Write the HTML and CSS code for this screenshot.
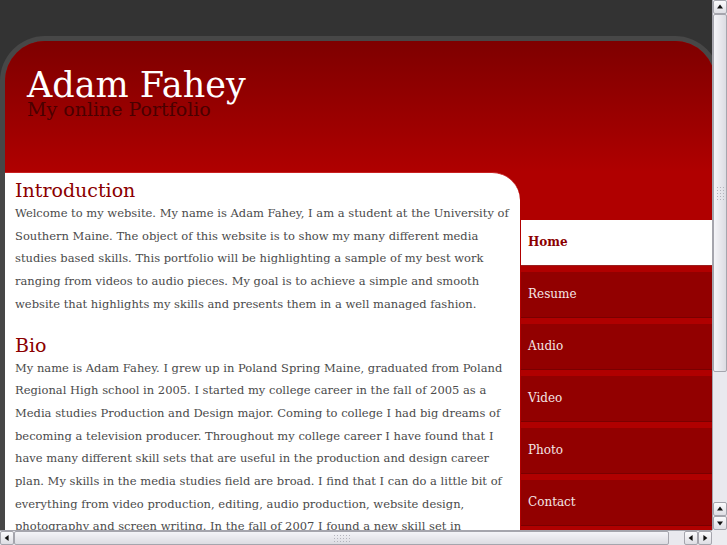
FILE: index.html
```html
<!DOCTYPE html>
<html>
<head>
<meta charset="utf-8">
<title>Adam Fahey - My online Portfolio</title>
<link rel="stylesheet" href="styles.css">
</head>
<body>
<div class="page">
  <header class="header">
    <h1 class="title">Adam Fahey</h1>
    <p class="subtitle">My online Portfolio</p>
  </header>
  <div class="main">
    <div class="content">
      <h2 class="heading">Introduction</h2>
      <p class="text">Welcome to my website. My name is Adam Fahey, I am a student at the University of Southern Maine. The object of this website is to show my many different media studies based skills. This portfolio will be highlighting a sample of my best work ranging from videos to audio pieces. My goal is to achieve a simple and smooth website that highlights my skills and presents them in a well managed fashion.</p>
      <h2 class="heading heading-bio">Bio</h2>
      <p class="text">My name is Adam Fahey. I grew up in Poland Spring Maine, graduated from Poland Regional High school in 2005. I started my college career in the fall of 2005 as a Media studies Production and Design major. Coming to college I had big dreams of becoming a television producer. Throughout my college career I have found that I have many different skill sets that are useful in the production and design career plan. My skills in the media studies field are broad. I find that I can do a little bit of everything from video production, editing, audio production, website design, photography and screen writing. In the fall of 2007 I found a new skill set in</p>
    </div>
    <nav class="nav">
      <a class="nav-item active">Home</a>
      <a class="nav-item">Resume</a>
      <a class="nav-item">Audio</a>
      <a class="nav-item">Video</a>
      <a class="nav-item">Photo</a>
      <a class="nav-item">Contact</a>
    </nav>
  </div>
</div>

<div class="vscroll">
  <div class="sb-btn up"></div>
  <div class="v-track">
    <div class="v-thumb"><span class="grip grip-v"></span></div>
  </div>
  <div class="sb-btn up"></div>
  <div class="sb-btn down"></div>
</div>
<div class="hscroll">
  <div class="sb-btn left"></div>
  <div class="h-track">
    <div class="h-thumb"><span class="grip grip-h"></span></div>
  </div>
  <div class="sb-btn left"></div>
  <div class="sb-btn right"></div>
</div>
<div class="sb-corner"></div>
</body>
</html>
```

FILE: styles.css
```css
html, body {
  margin: 0;
  padding: 0;
  height: 545px;
  overflow: hidden;
  background: #333333;
}

.page {
  margin-top: 36px;
  width: 710px;
  border: 5px solid #474747;
  border-bottom: none;
  border-radius: 45px 45px 0 0;
  background: #b00000;
  overflow: hidden;
}

.header {
  height: 131px;
  padding: 0 0 0 22px;
  background: linear-gradient(#7e0000, #8a0000 25%, #a00000 70%, #b00000);
  font-family: "DejaVu Serif", serif;
}

.title {
  margin: 0;
  padding-top: 28px;
  font-size: 35px;
  font-weight: normal;
  line-height: 32px;
  color: #ffffff;
}

.subtitle {
  margin: 1px 0 0 0;
  font-size: 19px;
  line-height: 14px;
  color: #4a0000;
}

.main {
  display: flex;
  align-items: flex-start;
}

.content {
  width: 495px;
  flex: none;
  background: #ffffff;
  border-top: 1px solid #c82020;
  border-top-right-radius: 28px;
  padding: 5px 10px 0 10px;
  height: 400px;
  font-family: "DejaVu Serif", serif;
}

.heading {
  margin: 0;
  font-size: 19px;
  font-weight: normal;
  line-height: 24px;
  color: #8b0000;
}

.heading-bio {
  margin-top: 17px;
}

.text {
  margin: 0;
  font-size: 11.5px;
  line-height: 22.7px;
  color: #4a4a4a;
}

.nav {
  flex: 1;
  padding-top: 48px;
  padding-left: 1px;
  display: flex;
  flex-direction: column;
  gap: 6px;
  font-family: "DejaVu Serif", serif;
}

.nav-item {
  display: block;
  height: 45px;
  line-height: 45px;
  padding-left: 7px;
  background: #920000;
  border-bottom: 1px solid #7a0000;
  color: #f4e6e6;
  font-size: 12px;
  text-decoration: none;
}

.nav-item.active {
  background: #ffffff;
  color: #8b0000;
  font-weight: bold;
  border-bottom-color: #9a2020;
}

/* drawn scrollbars */
.vscroll {
  position: fixed;
  top: 0;
  right: 0;
  width: 15px;
  height: 530px;
  display: flex;
  flex-direction: column;
  background: #e9e9ee;
  box-sizing: border-box;
  border-left: 1px solid #a5a5ad;
}

.hscroll {
  position: fixed;
  left: 0;
  bottom: 0;
  width: 712px;
  height: 15px;
  display: flex;
  background: #e9e9ee;
  box-sizing: border-box;
  border-top: 1px solid #a5a5ad;
}

.sb-corner {
  position: fixed;
  right: 0;
  bottom: 0;
  width: 15px;
  height: 15px;
  background: #ececf0;
}

.sb-btn {
  flex: none;
  width: 14px;
  height: 14px;
  box-sizing: border-box;
  border: 1px solid #a5a5ad;
  border-radius: 2px;
  background: linear-gradient(#fbfbfd, #dedee4);
  position: relative;
}

.sb-btn::after {
  content: "";
  position: absolute;
  left: 50%;
  top: 50%;
  width: 0;
  height: 0;
  border: 3px solid transparent;
}

.sb-btn.up::after {
  border-bottom: 4px solid #111;
  border-top: none;
  transform: translate(-50%, -60%);
}

.sb-btn.down::after {
  border-top: 4px solid #111;
  border-bottom: none;
  transform: translate(-50%, -40%);
}

.sb-btn.left::after {
  border-right: 4px solid #111;
  border-left: none;
  transform: translate(-60%, -50%);
}

.sb-btn.right::after {
  border-left: 4px solid #111;
  border-right: none;
  transform: translate(-40%, -50%);
}

.v-track {
  flex: 1;
  position: relative;
}

.v-thumb {
  height: 358px;
  box-sizing: border-box;
  border: 1px solid #a5a5ad;
  border-radius: 2px;
  background: linear-gradient(90deg, #f4f4f8, #dcdce2);
  display: flex;
  align-items: center;
  justify-content: center;
}

.h-track {
  flex: 1;
  position: relative;
}

.h-thumb {
  width: 655px;
  height: 100%;
  box-sizing: border-box;
  border: 1px solid #a5a5ad;
  border-radius: 2px;
  background: linear-gradient(#f4f4f8, #dcdce2);
  display: flex;
  align-items: center;
  justify-content: center;
}

.grip {
  display: block;
  background-image: radial-gradient(circle, #b4b4bc 0.8px, transparent 1px);
  background-size: 3px 3px;
}

.grip-v {
  width: 9px;
  height: 15px;
}

.grip-h {
  width: 18px;
  height: 9px;
}
```
